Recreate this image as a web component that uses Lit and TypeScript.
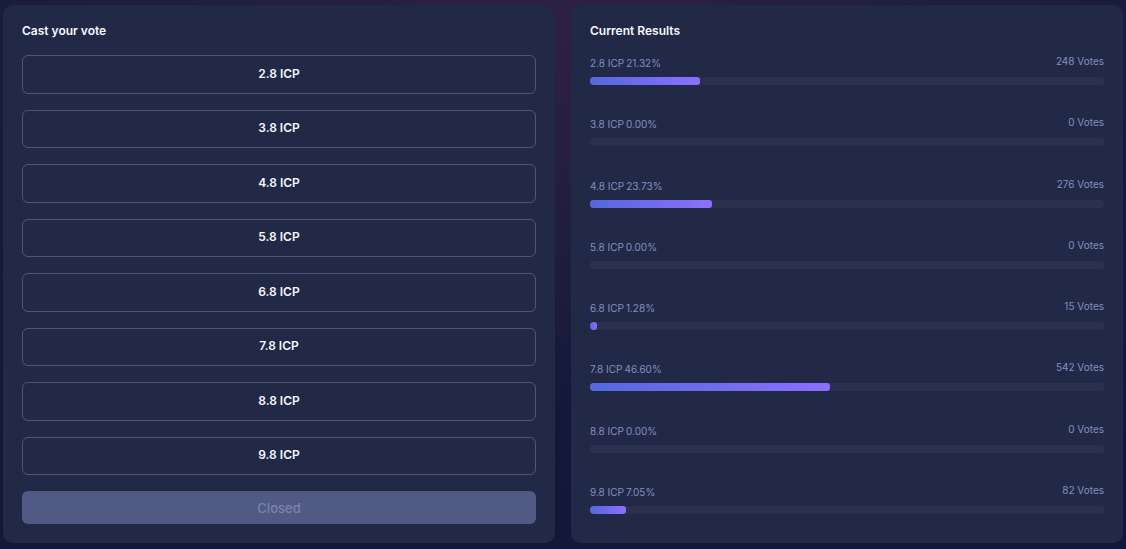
import { LitElement, html, css } from "lit";
import { customElement, property } from "lit/decorators.js";
import { styleMap } from "lit/directives/style-map.js";

interface Option {
  name: string;
  percent: number;
  votes: number;
}

const OPTIONS: Option[] = [
  { name: "2.8 ICP", percent: 21.32, votes: 248 },
  { name: "3.8 ICP", percent: 0, votes: 0 },
  { name: "4.8 ICP", percent: 23.73, votes: 276 },
  { name: "5.8 ICP", percent: 0, votes: 0 },
  { name: "6.8 ICP", percent: 1.28, votes: 15 },
  { name: "7.8 ICP", percent: 46.6, votes: 542 },
  { name: "8.8 ICP", percent: 0, votes: 0 },
  { name: "9.8 ICP", percent: 7.05, votes: 82 },
];

@customElement("result-row")
class ResultRow extends LitElement {
  @property({ attribute: false }) option!: Option;

  static styles = css`
    :host {
      display: flex;
      flex-direction: column;
      gap: 6px;
      color: #8390c2;
      font-size: 10px;
    }
    .labels {
      display: flex;
      justify-content: space-between;
      align-items: flex-start;
    }
    .name {
      display: flex;
      gap: 2px;
      line-height: 16px;
    }
    .votes {
      line-height: 12px;
    }
    .track {
      height: 8px;
      border-radius: 3px;
      background: #2a304e;
      overflow: hidden;
    }
    .fill {
      height: 100%;
      border-radius: 3px;
      background: linear-gradient(90deg, #5468dc, #8c6fff);
    }
  `;

  render() {
    const { name, percent, votes } = this.option;
    return html`
      <div class="labels">
        <div class="name"><span>${name}</span><span>${percent.toFixed(2)}%</span></div>
        <div class="votes">${votes} Votes</div>
      </div>
      <div
        class="track"
        role="progressbar"
        aria-label=${name}
        aria-valuemin="0"
        aria-valuemax="100"
        aria-valuenow=${percent}
      >
        <div class="fill" style=${styleMap({ width: `${percent}%` })}></div>
      </div>
    `;
  }
}

@customElement("app-root")
class AppRoot extends LitElement {
  static styles = css`
    :host {
      display: block;
      font-family: Inter, "Open Sans", sans-serif;
    }
    .page {
      box-sizing: border-box;
      min-height: 100vh;
      display: grid;
      grid-template-columns: 1fr 1fr;
      gap: 16px;
      padding: 5px 3px 6px;
      background:
        radial-gradient(ellipse 50% 75% at 50% 0, #2d2144, transparent),
        linear-gradient(#1a1c3d, #111838);
    }
    .card {
      display: flex;
      flex-direction: column;
      gap: 16px;
      padding: 18px 19px 19px;
      border-radius: 10px;
      background: #222946;
    }
    .results {
      padding-bottom: 29px;
    }
    .title {
      margin: 0;
      color: #f5f7ff;
      font-size: 12px;
      line-height: 16px;
      font-weight: 600;
    }
    .options {
      flex: 1;
      display: flex;
      flex-direction: column;
      gap: 16px;
    }
    button {
      box-sizing: border-box;
      width: 100%;
      margin: 0;
      padding: 0 0 2px;
      border-radius: 6px;
      font-family: inherit;
    }
    .option {
      flex: 1;
      min-height: 38px;
      border: 1px solid #4d557f;
      background: transparent;
      color: #f5f7ff;
      font-size: 12px;
      font-weight: 600;
      cursor: pointer;
    }
    .closed {
      height: 33px;
      padding: 0;
      border: 0;
      background: #505a85;
      color: #7d84a8;
      font-size: 13px;
      font-weight: 500;
    }
    .rows {
      flex: 1;
      display: flex;
      flex-direction: column;
      justify-content: space-between;
      gap: 16px;
    }
  `;

  render() {
    return html`
      <main class="page">
        <section class="card">
          <h2 class="title">Cast your vote</h2>
          <div class="options">
            ${OPTIONS.map((o) => html`<button class="option" type="button">${o.name}</button>`)}
          </div>
          <button class="closed" type="button" disabled>Closed</button>
        </section>
        <section class="card results">
          <h2 class="title">Current Results</h2>
          <div class="rows">
            ${OPTIONS.map((o) => html`<result-row .option=${o}></result-row>`)}
          </div>
        </section>
      </main>
    `;
  }
}
